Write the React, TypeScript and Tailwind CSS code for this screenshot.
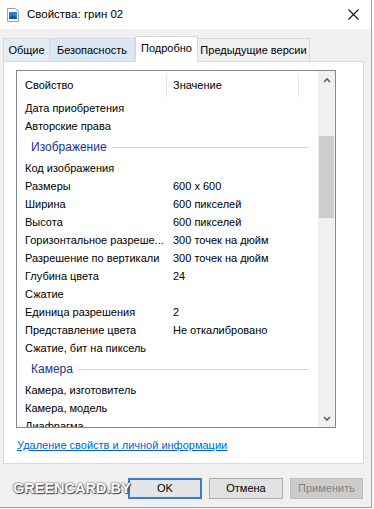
import React from "react";

type Row =
  | { kind: "row"; name: string; value?: string }
  | { kind: "group"; name: string };

const ROWS: Row[] = [
  { kind: "row", name: "Дата приобретения" },
  { kind: "row", name: "Авторские права" },
  { kind: "group", name: "Изображение" },
  { kind: "row", name: "Код изображения" },
  { kind: "row", name: "Размеры", value: "600 x 600" },
  { kind: "row", name: "Ширина", value: "600 пикселей" },
  { kind: "row", name: "Высота", value: "600 пикселей" },
  { kind: "row", name: "Горизонтальное разреше...", value: "300 точек на дюйм" },
  { kind: "row", name: "Разрешение по вертикали", value: "300 точек на дюйм" },
  { kind: "row", name: "Глубина цвета", value: "24" },
  { kind: "row", name: "Сжатие" },
  { kind: "row", name: "Единица разрешения", value: "2" },
  { kind: "row", name: "Представление цвета", value: "Не откалибровано" },
  { kind: "row", name: "Сжатие, бит на пиксель" },
  { kind: "group", name: "Камера" },
  { kind: "row", name: "Камера, изготовитель" },
  { kind: "row", name: "Камера, модель" },
  { kind: "row", name: "Диафрагма" },
];

function FileIcon() {
  return (
    <svg width="12" height="14" viewBox="0 0 12 14">
      <path d="M0.5 0.5h8l3 3v10h-11z" fill="#fff" stroke="#9aa3ad" />
      <rect x="2" y="4" width="8" height="7" fill="#2f7fd0" />
      <path d="M2 11l3-4 2 2 1-1 2 3z" fill="#1b4f8a" />
    </svg>
  );
}

function CloseIcon() {
  return (
    <svg width="11" height="11" viewBox="0 0 11 11">
      <path d="M0.5 0.5l10 10M10.5 0.5l-10 10" stroke="#111" strokeWidth="1.1" />
    </svg>
  );
}

function Chevron({ up }: { up?: boolean }) {
  return (
    <svg width="8" height="6" viewBox="0 0 8 6">
      <path
        d={up ? "M1 5l3-3 3 3" : "M1 1l3 3 3-3"}
        fill="none"
        stroke="#606060"
        strokeWidth="1.6"
      />
    </svg>
  );
}

export default function App() {
  return (
    <div className="w-[374px] h-[509px] bg-white font-['Liberation_Sans',sans-serif] text-[11px] text-black">
      <div className="relative w-[372px] h-[508px] flex flex-col border-r border-b border-[#d88a8a] bg-[#f0f0f0]">
        {/* title bar */}
        <div className="h-[29px] bg-white flex items-center pl-[7px] shrink-0">
          <FileIcon />
          <span className="ml-[8px] text-[11.5px] text-black leading-none">Свойства: грин 02</span>
          <span className="ml-auto mr-[12px] flex">
            <CloseIcon />
          </span>
        </div>

        <div className="flex flex-col px-[3px] pt-[6px]">
          {/* tabs */}
          <div className="flex items-end h-[26px] relative z-10 whitespace-nowrap">
            <div className="h-[23px] w-[47px] flex items-center justify-center border border-b-0 border-[#d9d9d9] bg-[#e3ecf6]">Общие</div>
            <div className="h-[23px] w-[85px] flex items-center justify-center border border-b-0 border-l-0 border-[#d9d9d9] bg-[#dae7f4]">Безопасность</div>
            <div className="h-[26px] w-[63px] flex items-center justify-center border border-b-0 border-[#d9d9d9] bg-white pb-[2px] -mb-px">Подробно</div>
            <div className="h-[23px] w-[112px] flex items-center justify-center border border-b-0 border-l-0 border-[#d9d9d9] bg-[#f0f0f0]">Предыдущие версии</div>
          </div>

          {/* panel */}
          <div className="h-[403px] w-[361px] bg-white border border-[#d9d9d9] pt-[8px] pl-[12px]">
            <div className="w-[320px] h-[358px] border border-[#828790] flex overflow-hidden">
              <div className="flex-1 flex flex-col overflow-hidden">
                <div className="h-[28px] flex items-center shrink-0">
                  <div className="w-[149px] pl-[8px]">Свойство</div>
                  <div className="w-px h-[23px] bg-[#e5e5e5]" />
                  <div className="w-[131px] pl-[6px]">Значение</div>
                  <div className="w-px h-[23px] bg-[#e5e5e5]" />
                </div>
                {ROWS.map((r, i) =>
                  r.kind === "group" ? (
                    <div key={i} className="h-[24px] flex items-center shrink-0 pl-[14px] pr-[9px]">
                      <span className="text-[#1e3287] text-[12px]">{r.name}</span>
                      <div className="flex-1 h-px bg-[#ccd7e4] ml-[5px]" />
                    </div>
                  ) : (
                    <div key={i} className="h-[18px] flex items-center shrink-0 whitespace-nowrap">
                      <div className="w-[150px] pl-[8px]">{r.name}</div>
                      <div className="pl-[6px]">{r.value ?? ""}</div>
                    </div>
                  )
                )}
              </div>
              {/* scrollbar */}
              <div className="w-[17px] bg-[#f0f0f0] flex flex-col shrink-0">
                <div className="h-[17px] flex items-center justify-center">
                  <Chevron up />
                </div>
                <div className="h-[48px]" />
                <div className="h-[82px] mx-[1px] bg-[#cdcdcd]" />
                <div className="flex-1" />
                <div className="h-[17px] flex items-center justify-center">
                  <Chevron />
                </div>
              </div>
            </div>
            <div className="mt-[9px] ml-px text-[#0066cc] underline leading-[16px]">
              Удаление свойств и личной информации
            </div>
          </div>

          {/* buttons */}
          <div className="flex justify-end gap-[7px] mt-[14px] pr-[5px]">
            <div className="w-[74px] h-[21px] flex items-center justify-center bg-[#e5e5e5] border-2 border-[#3b7dc4]">OK</div>
            <div className="w-[74px] h-[21px] flex items-center justify-center bg-[#e1e1e1] border border-[#adadad]">Отмена</div>
            <div className="w-[73px] h-[21px] flex items-center justify-center bg-[#cccccc] border border-[#bfbfbf] text-[#838383]">Применить</div>
          </div>
        </div>

        {/* watermark */}
        <div className="absolute left-[13px] top-[478px] font-['Liberation_Sans',sans-serif] font-bold text-[14.5px] text-white [text-shadow:0_0_1px_#555,0_0_2px_#555,1px_1px_1px_#444]">
          GREENCARD.BY
        </div>
      </div>
    </div>
  );
}
